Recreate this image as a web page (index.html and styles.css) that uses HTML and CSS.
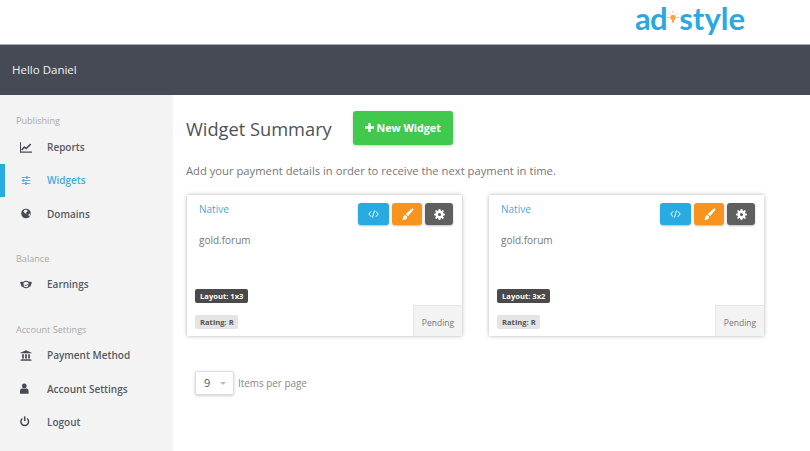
FILE: index.html
```html
<!DOCTYPE html>
<html lang="en">
<head>
  <meta charset="UTF-8">
  <title>Widget Summary</title>
  <link rel="stylesheet" href="styles.css">
</head>
<body>

  <!-- Logo row -->
  <div class="top">
    <div class="logo">
      <span class="logo-ad">ad</span>
      <svg class="logo-bulb" viewBox="0 0 16 20" width="12" height="15">
        <circle cx="8" cy="10" r="3.6" fill="#f7a24a"/>
        <rect x="6.8" y="12" width="2.4" height="5" fill="#f7a24a"/>
        <path d="M8 1v3M2 4l2 2M14 4l-2 2M0 10h3M16 10h-3" stroke="#f9b678" stroke-width="1.2"/>
      </svg>
      <span>style</span>
    </div>
  </div>

  <div class="hello-bar">Hello Daniel</div>

  <div class="main">
    <!-- Sidebar -->
    <div class="sidebar">
      <div class="side-title">Publishing</div>
      <a class="side-link">
        <svg class="side-icon" viewBox="0 0 14 12"><path d="M.6 0v11.4H14" fill="none" stroke="currentColor" stroke-width="1.2"/><path d="M2 9l3-3.5 2.2 1.6L12.5 2" fill="none" stroke="currentColor" stroke-width="1.8"/></svg>
        Reports
      </a>
      <a class="side-link active">
        <svg class="side-icon" viewBox="0 0 14 12"><path d="M2 2.5h10M2 6h10M2 9.5h10" stroke="currentColor" stroke-width="1"/><path d="M8 1v3M4 4.5v3M7 8v3" stroke="currentColor" stroke-width="2"/></svg>
        Widgets
      </a>
      <a class="side-link">
        <svg class="side-icon" viewBox="0 0 14 12"><circle cx="7" cy="6" r="5.6" fill="currentColor"/><path d="M5 1.800l3-.3 1 1.500-2 2 .5 2-2-1.500-1.500-1.500zM10 6.500l2-.5-.5 2.500-1.500.5z" fill="#f3f3f3"/></svg>
        Domains
      </a>

      <div class="side-title gap">Balance</div>
      <a class="side-link earnings">
        <svg class="side-icon" viewBox="0 0 14 12"><path d="M0 3.500l3-1 1.500 5.500-2.500 .5zM14 3.500l-3-1-1.500 5.500 2.500 .5z" fill="currentColor"/><circle cx="7" cy="6" r="3.800" fill="none" stroke="currentColor" stroke-width="1.300"/><path d="M5.500 6.500l1.500 1 2-2" fill="none" stroke="currentColor"/></svg>
        Earnings
      </a>

      <div class="side-title gap">Account Settings</div>
      <a class="side-link">
        <svg class="side-icon" viewBox="0 0 14 12"><path d="M7 0l6.500 2.800v.7H.5v-.7zM1.500 10h11v.8H1.500zM.5 11h13v1H.5z" fill="currentColor"/><path d="M2.500 4.500h2V9.500h-2zM6 4.500h2V9.500H6zM9.500 4.500h2V9.500h-2z" fill="currentColor"/></svg>
        Payment Method
      </a>
      <a class="side-link">
        <svg class="side-icon" viewBox="0 0 14 12"><circle cx="5" cy="3" r="2.800" fill="currentColor"/><path d="M0 12V8.500Q0 6 2.500 6h5Q10 6 10 8.500V12z" fill="currentColor"/></svg>
        Account Settings
      </a>
      <a class="side-link">
        <svg class="side-icon" viewBox="0 0 14 12"><path d="M2.800 2.500a4.500 4.500 0 1 0 5.400 0" fill="none" stroke="currentColor" stroke-width="1.700"/><path d="M5.500 0v5.500" stroke="currentColor" stroke-width="1.800"/></svg>
        Logout
      </a>
    </div>

    <!-- Content -->
    <div class="content">
      <div class="head-row">
        <h2>Widget Summary</h2>
        <button class="new-btn">
          <svg viewBox="0 0 10 10" width="9" height="9"><path d="M3.700 0h2.600v3.700H10v2.600H6.300V10H3.700V6.300H0V3.700h3.700z" fill="#fff"/></svg>
          New Widget
        </button>
      </div>
      <p class="notice">Add your payment details in order to receive the next payment in time.</p>

      <div class="cards">
        <div class="card">
          <div class="card-top">
            <div class="card-info">
              <a class="card-type">Native</a>
              <div class="card-site">gold.forum</div>
            </div>
            <div class="card-btns">
              <button class="icon-btn blue">
                <svg viewBox="0 0 14 10" width="11" height="8"><path d="M4 1.500L1 5l3 3.500M10 1.500L13 5l-3 3.500M8.300 .5L5.700 9.500" fill="none" stroke="#fff" stroke-width="1.200"/></svg>
              </button>
              <button class="icon-btn orange">
                <svg viewBox="0 0 14 14" width="13" height="13"><path d="M13 .5q.8.800 0 1.800L7.500 9 5 6.700 11.500.8q.9-.7 1.500-.3zM4.300 7.500l2.400 2.300Q6.500 13 1 13q1.800-1.200 1.500-3 .2-2 1.800-2.500z" fill="#fff"/></svg>
              </button>
              <button class="icon-btn grey">
                <svg viewBox="0 0 14 14" width="11" height="11"><path d="M6 0h2l.4 2 1.200.5L11.300 1.400l1.300 1.300-1.100 1.700.5 1.200 2 .4v2l-2 .4-.5 1.200 1.100 1.700-1.300 1.300-1.700-1.100-1.200.5-.4 2H6l-.4-2-1.200-.5-1.700 1.100-1.300-1.300 1.100-1.700-.5-1.200-2-.4V6l2-.4.5-1.200-1.100-1.700 1.300-1.300 1.700 1.100 1.200-.5zM7 5a2 2 0 1 0 0 4 2 2 0 0 0 0-4z" fill="#fff" fill-rule="evenodd"/></svg>
              </button>
            </div>
          </div>
          <div class="card-bottom">
            <div class="tags">
              <span class="tag dark">Layout: 1x3</span>
              <span class="tag light">Rating: R</span>
            </div>
            <div class="status">Pending</div>
          </div>
        </div>

        <div class="card">
          <div class="card-top">
            <div class="card-info">
              <a class="card-type">Native</a>
              <div class="card-site">gold.forum</div>
            </div>
            <div class="card-btns">
              <button class="icon-btn blue">
                <svg viewBox="0 0 14 10" width="11" height="8"><path d="M4 1.500L1 5l3 3.500M10 1.500L13 5l-3 3.500M8.300 .5L5.700 9.500" fill="none" stroke="#fff" stroke-width="1.200"/></svg>
              </button>
              <button class="icon-btn orange">
                <svg viewBox="0 0 14 14" width="13" height="13"><path d="M13 .5q.8.800 0 1.800L7.500 9 5 6.700 11.500.8q.9-.7 1.500-.3zM4.300 7.500l2.400 2.300Q6.500 13 1 13q1.800-1.200 1.500-3 .2-2 1.800-2.500z" fill="#fff"/></svg>
              </button>
              <button class="icon-btn grey">
                <svg viewBox="0 0 14 14" width="11" height="11"><path d="M6 0h2l.4 2 1.200.5L11.300 1.400l1.300 1.300-1.100 1.700.5 1.200 2 .4v2l-2 .4-.5 1.200 1.100 1.700-1.300 1.300-1.700-1.100-1.200.5-.4 2H6l-.4-2-1.200-.5-1.700 1.100-1.300-1.300 1.100-1.700-.5-1.200-2-.4V6l2-.4.5-1.200-1.100-1.700 1.300-1.300 1.700 1.100 1.200-.5zM7 5a2 2 0 1 0 0 4 2 2 0 0 0 0-4z" fill="#fff" fill-rule="evenodd"/></svg>
              </button>
            </div>
          </div>
          <div class="card-bottom">
            <div class="tags">
              <span class="tag dark">Layout: 3x2</span>
              <span class="tag light">Rating: R</span>
            </div>
            <div class="status">Pending</div>
          </div>
        </div>
      </div>

      <div class="pager">
        <div class="pager-select">9 <span class="caret"></span></div>
        <span class="pager-label">Items per page</span>
      </div>
    </div>
  </div>

</body>
</html>
```

FILE: styles.css
```css
* {
  box-sizing: border-box;
  margin: 0;
  padding: 0;
}

html,
body {
  height: 451px;
  overflow: hidden;
}

body {
  font-family: 'Open Sans', sans-serif;
  background: #ffffff;
  color: #555;
}

.top {
  height: 44px;
  display: flex;
  justify-content: flex-end;
  padding-right: 65px;
}

.logo {
  display: flex;
  align-items: flex-start;
  font-family: 'Lato', sans-serif;
  font-weight: 700;
  font-size: 31px;
  line-height: 36px;
  color: #2aa9e0;
  height: 44px;
}

.logo-ad {
  letter-spacing: -0.5px;
}

.logo-bulb {
  margin-top: 10px;
}

.hello-bar {
  height: 51px;
  background: #454a54;
  border-top: 1px solid #a9abae;
  color: #f2f2f2;
  font-size: 11.5px;
  line-height: 50px;
  padding-left: 12px;
}

.main {
  display: flex;
  height: 356px;
}

.sidebar {
  width: 173px;
  background: #f3f3f3;
  padding-top: 18.5px;
}

.side-title {
  font-size: 9.1px;
  line-height: 14px;
  color: #a9a9a9;
  padding-left: 16px;
  margin-bottom: 3px;
}

.side-title.gap {
  margin-top: 21.5px;
  margin-bottom: 2px;
}

.side-link {
  display: flex;
  align-items: center;
  height: 33.3px;
  padding-left: 20px;
  font-size: 10px;
  font-weight: 600;
  color: #555a63;
}

.side-link.earnings {
  padding-bottom: 1px;
}

.side-icon {
  width: 12px;
  height: 11px;
  margin-right: 15px;
  color: #454a54;
}

.side-link.active {
  color: #3fa9e0;
  border-left: 5px solid #29abe2;
  padding-left: 15px;
}

.side-link.active .side-icon {
  color: #3fa9e0;
}

.content {
  flex: 1;
  padding: 16px 0 0 13px;
}

.head-row {
  display: flex;
  align-items: center;
  gap: 21px;
}

h2 {
  font-size: 18.25px;
  font-weight: 400;
  color: #4d525b;
}

.new-btn {
  width: 100px;
  height: 34px;
  border: none;
  border-radius: 3px;
  background: #41c94e;
  color: #ffffff;
  font-family: inherit;
  font-size: 10.7px;
  font-weight: 700;
  box-shadow: 0 1px 3px rgba(0, 0, 0, 0.2);
}

.notice {
  font-size: 11.22px;
  color: #777;
  margin-top: 18px;
}

.cards {
  display: flex;
  gap: 26.5px;
  margin: 17px 0 0 0.5px;
}

.card {
  width: 275.5px;
  height: 141px;
  background: #ffffff;
  box-shadow: 0 0 4px rgba(0, 0, 0, 0.3);
  display: flex;
  flex-direction: column;
  justify-content: space-between;
}

.card-top {
  display: flex;
  justify-content: space-between;
  padding: 7px 9px 0 12.5px;
}

.card-type {
  display: block;
  font-size: 10px;
  color: #4ba6dd;
  line-height: 14px;
}

.card-site {
  font-size: 10px;
  color: #777;
  margin-top: 17px;
}

.card-btns {
  display: flex;
  gap: 3px;
  margin-top: 1px;
}

.icon-btn {
  height: 22px;
  width: 31px;
  border: none;
  border-radius: 3px;
  display: flex;
  align-items: center;
  justify-content: center;
  box-shadow: 0 1px 2px rgba(0, 0, 0, 0.25);
}

.icon-btn.blue {
  background: #29abe2;
}

.icon-btn.orange {
  background: #f7941e;
  width: 30px;
}

.icon-btn.grey {
  background: #5f5f5f;
  width: 28px;
}

.card-bottom {
  display: flex;
  justify-content: space-between;
  align-items: flex-end;
}

.tags {
  display: flex;
  flex-direction: column;
  align-items: flex-start;
  gap: 12px;
  padding: 0 0 7px 8.5px;
}

.tag {
  font-size: 7.6px;
  font-weight: 700;
  line-height: 14px;
  padding: 0 5px;
  border-radius: 2px;
}

.tag.dark {
  background: #4a4a4a;
  color: #ffffff;
}

.tag.light {
  background: #e4e4e4;
  color: #555;
  padding-right: 4px;
}

.status {
  width: 49px;
  height: 31px;
  background: #f3f3f3;
  color: #777;
  font-size: 8.5px;
  line-height: 33px;
  text-align: center;
  border-left: 1px solid #e6e6e6;
  border-top: 1px solid #e6e6e6;
}

.pager {
  display: flex;
  align-items: center;
  gap: 4px;
  margin: 35px 0 0 9px;
}

.pager-select {
  width: 39px;
  height: 24px;
  border: 1px solid #ddd;
  border-radius: 2px;
  box-shadow: 0 1px 3px rgba(0, 0, 0, 0.2);
  font-size: 11px;
  line-height: 22px;
  padding-left: 8px;
  color: #555;
  position: relative;
}

.caret {
  position: absolute;
  right: 7px;
  top: 10px;
  border-left: 3px solid transparent;
  border-right: 3px solid transparent;
  border-top: 3px solid #bbb;
}

.pager-label {
  font-size: 9.9px;
  color: #888;
}
```
